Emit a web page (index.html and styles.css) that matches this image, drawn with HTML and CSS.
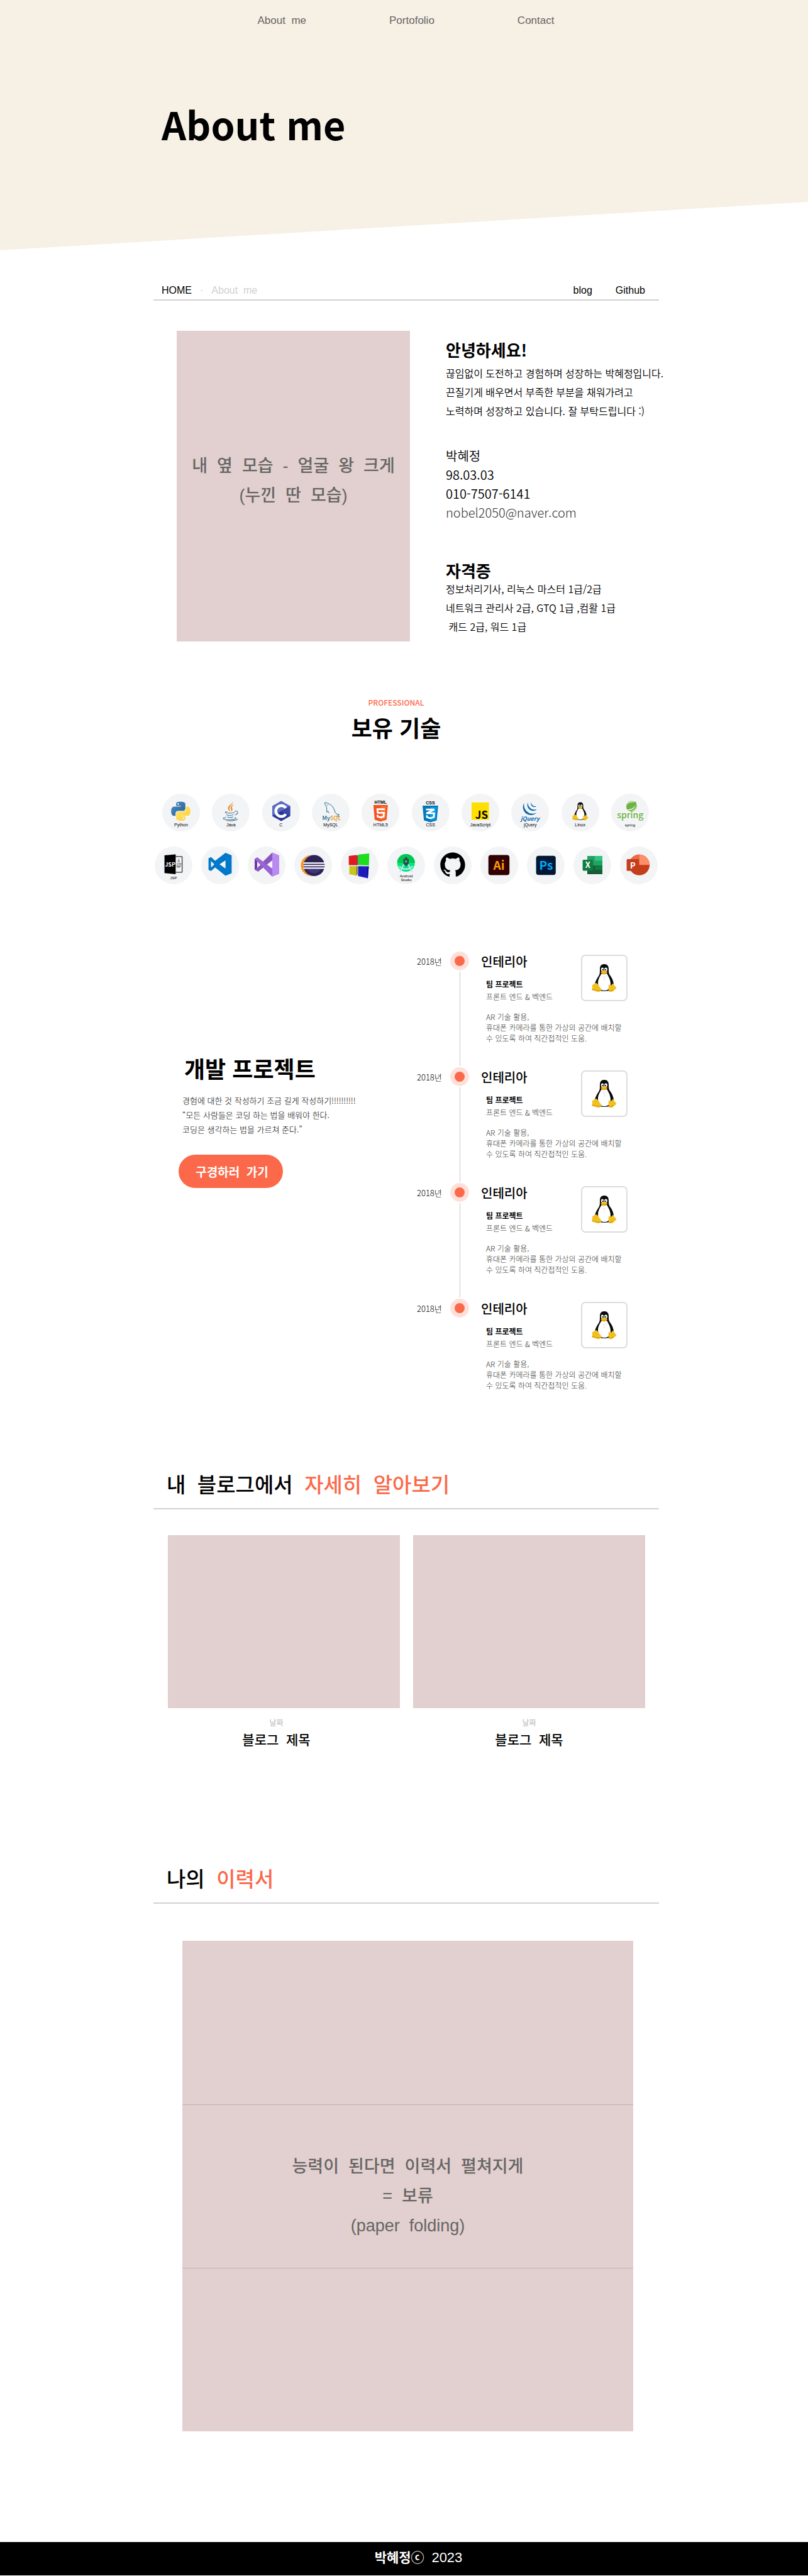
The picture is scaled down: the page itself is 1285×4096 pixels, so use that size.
FILE: index.html
```html
<!DOCTYPE html>
<html lang="ko">
<head>
<meta charset="utf-8">
<meta name="viewport" content="width=device-width, initial-scale=1">
<title>About me</title>
<link rel="stylesheet" href="styles.css">
</head>
<body>
<svg class="sprite" aria-hidden="true">
  <symbol id="tux" viewBox="0 0 40 46">
    <path d="M20 1c-5 0-7 3-7 8 0 6 0 8-2 11-3 5-6 9-6 15 0 6 6 9 15 9s15-3 15-9c0-6-2-11-5-15s-3-6-3-11c0-5-2-8-7-8z" fill="#0a0a0a"/>
    <path d="M15 17c-2 4-5 8-5 14 0 8 4 12 10 12 7 0 10-4 10-11 0-7-4-12-5-15-3-2-7-2-10 0z" fill="#fff"/>
    <ellipse cx="17" cy="9.500" rx="2.200" ry="3" fill="#fff"/>
    <ellipse cx="22.500" cy="9.500" rx="2.400" ry="3" fill="#fff"/>
    <circle cx="17.600" cy="10" r="1.100"/><circle cx="22" cy="10" r="1.100"/>
    <path d="M14.500 13.500c2-2 3.500-2.500 5.500-2.500s4 1.500 5 2.500c0 2-3.500 4-5.500 4s-5-2-5-4z" fill="#f4b921"/>
    <path d="M15 14.500c3 1.500 6 1.500 9.500-.5" fill="none" stroke="#a87708" stroke-width=".6"/>
    <path d="M1 34c2 0 4-3 6-3s5 6 8 9c1 3-1 5-4 5-4 0-6-2-9-2-3-1-1-3-1-5v-4z" fill="#f2c01e"/>
    <path d="M27 33c1 2 4 3 6-1 2 0 3 3 6 6 1 2-2 3-4 5-2 3-8 3-8 0-1-3 0-7 0-10z" fill="#f2c01e"/>
    <path d="M1 41c3 1 8 3 13 2M27 43c3 1 5 0 8-2" fill="none" stroke="#c9930f" stroke-width="1"/>
    <path d="M20 20v8M17 21l2 1M22 22l2-1" stroke="#d4d4d4" stroke-width=".7" fill="none"/>
  </symbol>
</svg>

<header class="hero">
  <nav class="nav">
    <a href="#about">About  me</a>
    <a href="#projects">Portofolio</a>
    <a href="#resume">Contact</a>
  </nav>
  <h1 class="hero-title">About me</h1>
</header>

<main class="content">
  <div class="crumbs">
    <div class="crumb-path"><a href="#">HOME</a><span class="crumb-dot">·</span><span class="crumb-here">About  me</span></div>
    <div class="crumb-links"><a href="#blog">blog</a><a href="#github">Github</a></div>
  </div>

  <section class="profile" id="about">
    <div class="photo placeholder">내  옆  모습  -  얼굴  왕  크게
(누낀  딴  모습)</div>
    <div class="bio">
      <h2 class="bio-title">안녕하세요!</h2>
      <p class="bio-text intro">끊임없이 도전하고 경험하며 성장하는 박혜정입니다.<br>끈질기게 배우면서 부족한 부분을 채워가려고<br>노력하며 성장하고 있습니다. 잘 부탁드립니다 :)</p>
      <ul class="facts">
        <li>박혜정</li>
        <li>98.03.03</li>
        <li>010-7507-6141</li>
        <li><a href="mailto:nobel2050@naver.com">nobel2050@naver.com</a></li>
      </ul>
      <h2 class="bio-title">자격증</h2>
      <p class="bio-text">정보처리기사, 리눅스 마스터 1급/2급<br>네트워크 관리사 2급, GTQ 1급 ,컴활 1급<br>&nbsp;캐드 2급, 워드 1급</p>
    </div>
  </section>

  <section class="skills">
    <p class="eyebrow">PROFESSIONAL</p>
    <h2 class="title">보유 기술</h2>
    <ul class="skill-row inset">
      <li class="skill"><svg viewBox="0 0 60 60"><defs><linearGradient id="pyb" x1="0" y1="0" x2="1" y2="1"><stop offset="0" stop-color="#4b8fc9"/><stop offset="1" stop-color="#2b5f8e"/></linearGradient><linearGradient id="pyy" x1="0" y1="0" x2="1" y2="1"><stop offset="0" stop-color="#ffe873"/><stop offset="1" stop-color="#ffcc2e"/></linearGradient></defs><g transform="translate(14.300 12.700) scale(1.260)"><path fill="url(#pyb)" d="M14.250.18l.9.2.73.26.59.3.45.32.34.34.25.34.16.33.1.3.04.26.02.2-.01.13V8.500l-.05.63-.13.55-.21.46-.26.38-.3.31-.33.25-.35.19-.35.14-.33.1-.3.07-.26.04-.21.02H8.770l-.69.05-.59.14-.5.22-.41.27-.33.32-.27.35-.2.36-.15.37-.1.35-.07.32-.04.27-.02.21v3.060H3.170l-.21-.03-.28-.07-.32-.12-.35-.18-.36-.26-.36-.36-.35-.46-.32-.59-.28-.73-.21-.88-.14-1.050-.05-1.230.06-1.220.16-1.040.24-.87.32-.71.36-.57.4-.44.42-.33.42-.24.4-.16.36-.1.32-.05.24-.01h.16l.06.01h8.160v-.83H6.180l-.01-2.750-.02-.37.05-.34.11-.31.17-.28.25-.26.31-.23.38-.2.44-.18.51-.15.58-.12.64-.1.71-.06.77-.04.84-.02 1.270.05zm-6.300 1.980l-.23.33-.08.41.08.41.23.34.33.22.41.09.41-.09.33-.22.23-.34.08-.41-.08-.41-.23-.33-.33-.22-.41-.09-.41.09z"/><path fill="url(#pyy)" d="M21.040 6.110l.28.06.32.12.35.18.36.27.36.35.35.47.32.59.28.73.21.88.14 1.040.05 1.230-.06 1.230-.16 1.040-.24.86-.32.71-.36.57-.4.45-.42.33-.42.24-.4.16-.36.09-.32.05-.24.02-.16-.01h-8.220v.82h5.840l.01 2.760.02.36-.05.34-.11.31-.17.29-.25.25-.31.24-.38.2-.44.17-.51.15-.58.13-.64.09-.71.07-.77.04-.84.01-1.270-.04-1.070-.14-.9-.2-.73-.25-.59-.3-.45-.33-.34-.34-.25-.34-.16-.33-.1-.3-.04-.25-.02-.2.01-.13v-5.340l.05-.64.13-.54.21-.46.26-.38.3-.32.33-.24.35-.2.35-.14.33-.1.3-.06.26-.04.21-.02.13-.01h5.840l.69-.05.59-.14.5-.21.41-.28.33-.32.27-.35.2-.36.15-.36.1-.35.07-.32.04-.28.02-.21V6.070h2.090zM14.570 20.360l-.23.33-.08.41.08.41.23.33.33.23.41.08.41-.08.33-.23.23-.33.08-.41-.08-.41-.23-.33-.33-.23-.41-.08-.41.08z"/></g></svg><span>Python</span></li>
      <li class="skill"><svg viewBox="0 0 60 60" fill="none" stroke-linecap="round"><path fill="#e58a1f" d="M33 10.500c2 5-7.500 8-7.500 12.500 0 2.500 2.500 4.500 4 6-1-3-2-4-1.500-6.500C28.500 19 35 16 33 10.500z"/><path fill="#e58a1f" d="M35.500 17c-4 1.500-6.500 4-5.500 7 .5 1.500 1.500 2.500.5 4.500 3-2 2.500-4 1.500-5.500-1-2 1-4 3.500-6z"/><g stroke="#4f7f9c" stroke-width="1.100"><path d="M24 28.500c-3 .5-4 1.500-1 2 4 .6 9 .3 13-.5M36.500 28c3-1 5 .5 4.500 2.500-.4 1.500-2 2.500-4 3"/><path d="M23.500 33c-.5 1.500 5 2 10.500.8M25 36.500c0 1.500 5 1.800 8.500.5"/><path d="M22 37.500c-6 1-5 3 1 3.500 6 .5 13 0 15-1.200 1-.8-.5-1.500-1.500-1.800M23 42.800c6 .6 16 .3 18-2.300"/></g></svg><span>Java</span></li>
      <li class="skill"><svg viewBox="0 0 60 60"><path fill="#5c6bc0" d="M30.200 11.600l14.300 8v16l-14.300 8-14.200-8v-16z"/><path fill="#3949ab" d="M44.500 19.600v16L30.200 27.600z"/><path fill="#283593" d="M16 35.600l14.200-8 14.300 8-14.300 8z"/><path fill="none" stroke="#fff" stroke-width="4.500" d="M37.500 22.700a8.700 8.700 0 1 0 0 9.800"/></svg><span>C</span></li>
      <li class="skill"><svg viewBox="0 0 60 60"><path fill="none" stroke="#14688f" stroke-width="1" stroke-linejoin="round" d="M27.500 31c-1-1-1.500-2-2-3.500-.5 1.500-1.500 2-1.500 2-1-3 0-5-.5-7-.5-3-3-5-3-7.500 0-1.500 3-1 5 .5 6 2 9.500 7 10.500 11.500 1 4 3.500 6 7.500 6.500l-2 .8c1 1 1.500 1.700 2.500 2.700-2 0-3.500-1-4.500-2"/><circle cx="25" cy="18" r=".7" fill="#14688f"/><text x="16.500" y="42" class="mark mysql"><tspan fill="#12608a">My</tspan><tspan fill="#e8941a">SQL</tspan></text></svg><span>MySQL</span></li>
      <li class="skill"><svg viewBox="0 0 60 60"><text x="30.200" y="16.300" class="mark heavy" text-anchor="middle">HTML</text><path fill="#f4511e" d="M18.800 18h23l-2.100 23.500-9.400 2.700-9.400-2.700z"/><path fill="#ff6d2e" d="M30.300 20v22l7.500-2.200L39.600 20z"/><path fill="none" stroke="#fff" stroke-width="2.800" d="M37 24.600H25.200l.5 5.800h10l-.6 6-4.800 1.500-4.700-1.500-.2-2.700"/></svg><span>HTML5</span></li>
      <li class="skill"><svg viewBox="0 0 60 60"><text x="29.500" y="16.700" class="mark heavy" text-anchor="middle">CSS</text><path fill="#0277bd" d="M17 19h24.800l-2.300 23.600-10.100 2.800-10.200-2.800z"/><path fill="#039be5" d="M29.400 21v22.300l8.200-2.300 2-20z"/><path fill="none" stroke="#fff" stroke-width="2.800" d="M22.500 25.200h13.200L23 31.200h12.400l-.5 6-5.500 1.900-5.400-1.900-.2-2.800"/></svg><span>CSS</span></li>
      <li class="skill"><svg viewBox="0 0 60 60"><path fill="#ffdf00" d="M16 14h27.500v27.500H16z"/><text x="42" y="39.500" text-anchor="end" class="mark js">JS</text></svg><span>JavaScript</span></li>
      <li class="skill"><svg viewBox="0 0 60 60"><g fill="#0868ac"><path d="M20.500 15c-4 6-1 14.500 5 17.500 5 2.500 11 1.800 14.500-2-5 2.200-10 1.500-13.500-1-5-3.500-7-9-6-14.500z"/><path d="M26.500 14c-2 4.500-.5 9.500 4 12 3.500 2 7.500 1.500 10-1-4 1-7 .5-9.500-1.500-3-2.500-4.700-5.500-4.500-9.500z"/><path d="M31.500 13.500c-1 3 0 5.500 2.500 7 2 1.200 4.500 1 6-.5-2.500.3-4.500-.3-6-1.500-1.500-1.400-2.500-3-2.500-5z"/></g><text x="30" y="42.500" text-anchor="middle" class="mark jquery">jQuery</text></svg><span>jQuery</span></li>
      <li class="skill"><svg viewBox="0 0 60 60"><use href="#tux" x="17" y="13" width="26" height="30"/></svg><span>Linux</span></li>
      <li class="skill"><svg viewBox="0 0 60 60"><circle cx="32.500" cy="20" r="8" fill="none" stroke="#6db33f" stroke-width=".8"/><path fill="#6db33f" d="M39 12.500c2 5 1 11-3.500 13.500-3 1.700-6 1.200-8.500.5 6-.5 10-2.500 11.500-8-3 4.500-7 6.500-13.500 6.500-2-5 .5-9 4-10.500 4-1.500 7 0 10-2z"/><text x="30.300" y="38.500" text-anchor="middle" class="mark spring">spring</text></svg><span class="small">spring</span></li>
    </ul>
    <ul class="skill-row">
      <li class="skill"><svg viewBox="0 0 60 60"><path d="M15.600 14l17.800-1.500V44l-17.800-1.800z"/><path d="M33.400 16h10.300v25H33.400" fill="none" stroke="#000" stroke-width="1"/><text x="24.600" y="31.500" text-anchor="middle" class="mark jsp">JSP</text><path fill="none" stroke="#222" stroke-width=".7" d="M38.500 19.500c1 2-2 3-1.500 5M39.500 22c-1 1-1 2 0 3M35.500 27h5.500M35 29c2 .8 4 .8 6 0M41 27c1.500-.3 1.500 1.500 0 1.800M34.500 31.200c2 .8 5 .8 7.500-.3M35.500 33h5"/></svg><span class="small">JSP</span></li>
      <li class="skill"><svg viewBox="0 0 60 60"><path fill="#0179cb" fill-rule="evenodd" d="M38.600 10l9.800 4v28.500l-9.800 4.100-16.500-13.300-6.500 5.700-4-2.100V18.700l4-1.900 6.500 5.900zM15.600 23.300v10.200l5.300-5.200zM38.600 22l-9.400 6.300 9.400 6.600z"/></svg></li>
      <li class="skill"><svg viewBox="0 0 60 60"><path fill="#6a3a9e" d="M11 20l5-2.500v21L11 36.500z"/><path fill="#f3f4f6" d="M15 23.300v11.200l5.500-5.500z"/><path fill="#8a57c0" d="M39 9.400V22L16.500 40l-5.500-3z"/><path fill="#f3f4f6" d="M15 23.300v10.700l5.300-5z"/><path fill="#9a63d6" d="M15 17l24 18v13L11 20z"/><path fill="#b98bf1" d="M39 9.400l11 4.600v29.500L39 48z"/></svg></li>
      <li class="skill"><svg viewBox="0 0 60 60"><path fill="#f7941e" d="M28 13c-10 1-17.500 8-17.500 17.300S18 46.500 28 47.500c-8-2.500-13-9-13-17.200S20 15.500 28 13z"/><circle cx="31.500" cy="30.300" r="16.800" fill="#2c2255"/><path fill="#41347f" d="M21 36h21c-2 4.500-6 6.500-10.500 6.500S23 40.500 21 36z"/><path fill="#fff" d="M14.500 25.300h34v2.200h-34zM14.500 29.300h34v2.200h-34zM14.500 33.300h34v2.200h-34z"/></svg></li>
      <li class="skill"><svg viewBox="0 0 60 60"><path fill="#e01b1f" d="M12.700 15l12-1.500v16.300l-12-.3z"/><path fill="#8c1013" d="M24.700 13.500l2 1v15l-2 .3z"/><path fill="#1ddd1c" d="M28.500 12.700L45.200 11l-.5 19-16.200-.5z"/><path fill="#0a8a0c" d="M27.300 13.500l1.200-.8v16.800h-1.200z"/><path fill="#c9c51f" d="M13.500 31l11 .2v15.200l-11-2.400z"/><path fill="#7d7a12" d="M24.500 31.200l2.200.3V44l-2.200 2.400z"/><path fill="#1b1bc0" d="M27.500 31.300l17 .3-1.500 19L27.500 47z"/><path fill="#0e0e78" d="M42.500 32l2-.4-1.500 19-1-.3z"/></svg></li>
      <li class="skill"><svg viewBox="0 0 60 60"><circle cx="29.700" cy="26" r="14" fill="#00e676"/><path fill="#00c853" d="M15.700 26a14 14 0 0 1 28 0z"/><g fill="none" stroke="#b8e8fb" stroke-width="2"><path d="M27.500 26L20 41M32 26l7.500 15"/><path d="M19 31.500c5 6 16 6 21.500-.5"/></g><path fill="#37474f" d="M28 17h3.500v2.500H34v8l-4.200 4-4.300-4v-8H28z"/><circle cx="29.700" cy="23.700" r="1.800" fill="#00e676"/></svg><span class="small double">Android<br>Studio</span></li>
      <li class="skill"><svg viewBox="0 0 60 60"><path transform="translate(10.300 9) scale(1.640)" d="M12 .297c-6.630 0-12 5.373-12 12 0 5.303 3.438 9.800 8.205 11.385.6.113.82-.258.82-.577 0-.285-.01-1.040-.015-2.040-3.338.724-4.042-1.610-4.042-1.610C4.422 18.070 3.633 17.700 3.633 17.700c-1.087-.744.084-.729.084-.729 1.205.084 1.838 1.236 1.838 1.236 1.070 1.835 2.809 1.305 3.495.998.108-.776.417-1.305.76-1.605-2.665-.3-5.466-1.332-5.466-5.930 0-1.310.465-2.380 1.235-3.220-.135-.303-.54-1.523.105-3.176 0 0 1.005-.322 3.300 1.230.96-.267 1.980-.399 3-.405 1.020.006 2.040.138 3 .405 2.280-1.552 3.285-1.230 3.285-1.230.645 1.653.24 2.873.12 3.176.765.84 1.230 1.910 1.230 3.220 0 4.610-2.805 5.625-5.475 5.920.42.36.81 1.096.81 2.220 0 1.606-.015 2.896-.015 3.286 0 .315.21.69.825.57C20.565 22.092 24 17.592 24 12.297c0-6.627-5.373-12-12-12"/></svg></li>
      <li class="skill"><svg viewBox="0 0 60 60"><rect x="12.700" y="13.400" width="33.500" height="32" rx="4" fill="#310000"/><text x="29.500" y="37" text-anchor="middle" class="mark adobe" fill="#ff9a00">Ai</text></svg></li>
      <li class="skill"><svg viewBox="0 0 60 60"><rect x="14.600" y="14.700" width="31.200" height="30.600" rx="4" fill="#001833"/><text x="30.500" y="36.500" text-anchor="middle" class="mark adobe" fill="#00a8ff">Ps</text></svg></li>
      <li class="skill"><svg viewBox="0 0 60 60"><path fill="#21a366" d="M22 15h24v29H22z"/><path fill="#33c481" d="M34 15h12v7.500H34z"/><path fill="#107c41" d="M22 30h24v7H22z"/><path fill="#185c37" d="M22 30h12v7h12v7H22z"/><rect x="14.600" y="21" width="16.600" height="17.400" rx="1.500" fill="#107c41"/><text x="22.800" y="34.200" text-anchor="middle" class="mark office">X</text></svg></li>
      <li class="skill"><svg viewBox="0 0 60 60"><circle cx="30.700" cy="29.300" r="16.500" fill="#c43e1c"/><path fill="#ed6c47" d="M14.200 29.300a16.500 16.500 0 0 1 16.500-16.500v16.500z"/><path fill="#ff8f6b" d="M30.700 12.800a16.500 16.500 0 0 1 16.500 16.500H30.700z"/><rect x="10.600" y="20" width="19.600" height="18.800" rx="1.500" fill="#c43e1c"/><text x="20.400" y="34.500" text-anchor="middle" class="mark office">P</text></svg></li>
    </ul>
  </section>

  <section class="projects" id="projects">
    <div class="pitch">
      <h2 class="title">개발 프로젝트</h2>
      <p class="pitch-text">경험에 대한 것 작성하기 조금 길게 작성하기!!!!!!!!!!<br>“모든 사람들은 코딩 하는 법을 배워야 한다.<br>코딩은 생각하는 법을 가르쳐 준다.”</p>
      <button type="button" class="cta">구경하러  가기</button>
    </div>
    <ol class="timeline">
      <li class="event">
        <time class="year" datetime="2018">2018년</time>
        <div class="track"><span class="dot"></span></div>
        <div class="event-body">
          <div><h3>인테리아</h3><p class="team">팀 프로젝트</p><p class="role">프론트 엔드 &amp; 벡엔드</p></div>
          <div class="thumb"><svg viewBox="0 0 40 46"><use href="#tux"/></svg></div>
          <p class="desc">AR 기술 활용,<br>휴대폰 카메라를 통한 가상의 공간에 배치할<br>수 있도록 하여 직간접적인 도움.</p>
        </div>
      </li>
      <li class="event">
        <time class="year" datetime="2018">2018년</time>
        <div class="track"><span class="dot"></span></div>
        <div class="event-body">
          <div><h3>인테리아</h3><p class="team">팀 프로젝트</p><p class="role">프론트 엔드 &amp; 벡엔드</p></div>
          <div class="thumb"><svg viewBox="0 0 40 46"><use href="#tux"/></svg></div>
          <p class="desc">AR 기술 활용,<br>휴대폰 카메라를 통한 가상의 공간에 배치할<br>수 있도록 하여 직간접적인 도움.</p>
        </div>
      </li>
      <li class="event">
        <time class="year" datetime="2018">2018년</time>
        <div class="track"><span class="dot"></span></div>
        <div class="event-body">
          <div><h3>인테리아</h3><p class="team">팀 프로젝트</p><p class="role">프론트 엔드 &amp; 벡엔드</p></div>
          <div class="thumb"><svg viewBox="0 0 40 46"><use href="#tux"/></svg></div>
          <p class="desc">AR 기술 활용,<br>휴대폰 카메라를 통한 가상의 공간에 배치할<br>수 있도록 하여 직간접적인 도움.</p>
        </div>
      </li>
      <li class="event">
        <time class="year" datetime="2018">2018년</time>
        <div class="track"><span class="dot"></span></div>
        <div class="event-body">
          <div><h3>인테리아</h3><p class="team">팀 프로젝트</p><p class="role">프론트 엔드 &amp; 벡엔드</p></div>
          <div class="thumb"><svg viewBox="0 0 40 46"><use href="#tux"/></svg></div>
          <p class="desc">AR 기술 활용,<br>휴대폰 카메라를 통한 가상의 공간에 배치할<br>수 있도록 하여 직간접적인 도움.</p>
        </div>
      </li>
    </ol>
  </section>

  <section class="blog" id="blog">
    <h2 class="section-title">내  블로그에서  <em>자세히  알아보기</em></h2>
    <div class="posts">
      <article class="post"><div class="cover"></div><div class="caption"><p class="date">날짜</p><h3>블로그  제목</h3></div></article>
      <article class="post"><div class="cover"></div><div class="caption"><p class="date">날짜</p><h3>블로그  제목</h3></div></article>
    </div>
  </section>

  <section class="resume" id="resume">
    <h2 class="section-title">나의  <em>이력서</em></h2>
    <div class="paper">
      <div class="fold"></div>
      <div class="fold placeholder">능력이  된다면  이력서  펼쳐지게
=  보류
(paper  folding)</div>
      <div class="fold"></div>
    </div>
  </section>
</main>

<footer class="footer">박혜정ⓒ  <span>2023</span></footer>
</body>
</html>
```
FILE: styles.css
```css
:root {
  --accent: #fb694a;
  --blush: #e2cfcf;
  --rule: #d2d2d2;
  --kr: "Noto Sans CJK KR", "Noto Sans", sans-serif;
  --latin: "Liberation Sans", "Noto Sans CJK KR", sans-serif;
}

* { box-sizing: border-box; margin: 0; padding: 0; }
body { font-family: var(--kr); color: #000; background: #fff; }
a { color: inherit; text-decoration: none; }
ul, ol { list-style: none; }
.sprite { display: block; width: 0; height: 0; }

/* Header */
.hero {
  height: 398px;
  padding-top: 22px;
  background: #f7f0e4;
  clip-path: polygon(0 0, 100% 0, 100% 321px, 0 398px);
}
.nav {
  display: flex;
  justify-content: center;
  gap: 132px;
  padding-left: 6px;
  font: 17px/22px var(--latin);
  color: #646464;
  white-space: pre;
}
.hero-title {
  margin: 109px 237px 0 257px;
  font-size: 61px;
  line-height: 88px;
  font-weight: 700;
}

.content { margin: 0 237px 0 244px; }

/* Breadcrumbs */
.crumbs {
  display: flex;
  justify-content: space-between;
  margin-top: 50px;
  padding: 0 22px 0 13px;
  border-bottom: 2px solid var(--rule);
  font: 16px/28px var(--latin);
  white-space: pre;
}
.crumb-path { display: flex; gap: 13px; }
.crumb-dot, .crumb-here { color: #d0d0d0; }
.crumb-links { display: flex; gap: 37px; }

/* Profile */
.placeholder {
  display: flex;
  align-items: center;
  justify-content: center;
  font: 500 27px/47px var(--latin);
  color: #666664;
  text-align: center;
  white-space: pre;
  background: var(--blush);
}
.profile {
  display: flex;
  gap: 57px;
  margin-top: 48px;
  padding-left: 37px;
}
.photo {
  flex: none;
  width: 371px;
  height: 494px;
  padding-bottom: 16px;
}
.bio { padding-top: 16px; white-space: nowrap; }
.bio-title { font-size: 26px; line-height: 28px; font-weight: 700; }
.bio-text { font-size: 16px; line-height: 30px; font-weight: 350; }
.intro { margin-top: 8px; }
.facts { margin: 42px 0 63px; font-size: 20px; line-height: 30px; font-weight: 350; }
.facts a { color: #333; font-weight: 300; }

/* Skills */
.title { font-size: 36px; line-height: 44px; font-weight: 700; }
.skills { margin-top: 88px; }
.eyebrow, .skills .title { padding-right: 32px; text-align: center; }
.eyebrow { color: var(--accent); font-size: 12px; line-height: 18px; font-weight: 500; }
.skills .title { margin: 8px 0 84px; }
.skill-row {
  display: flex;
  justify-content: space-between;
  padding: 0 2px;
}
.skill-row.inset { padding: 0 16px 0 14px; margin-bottom: 24px; }
.skill {
  display: grid;
  width: 60px;
  height: 60px;
  border-radius: 50%;
  background: #f3f4f6;
}
.skill > * { grid-area: 1 / 1; }
.skill svg { width: 60px; height: 60px; }
.skill span {
  align-self: end;
  margin: 0 -8px;
  padding-bottom: 5px;
  font: 7px/10px var(--latin);
  text-align: center;
}
.skill .small { font-size: 6px; line-height: 6px; padding-bottom: 7px; }
.skill .double { padding-bottom: 4px; }
.mark { font-family: var(--kr); font-weight: 700; }
.mysql { font-size: 9px; font-weight: 500; }
.heavy { font-family: "Liberation Sans", sans-serif; font-size: 7px; }
.js { font-size: 17px; }
.jquery { font-size: 9px; font-style: italic; fill: #0868ac; }
.spring { font-size: 14px; font-weight: 500; fill: #6db33f; }
.jsp { font-size: 9px; fill: #fff; }
.adobe { font-size: 19px; }
.office { font-size: 13px; fill: #fff; }

/* Projects */
.projects {
  display: flex;
  justify-content: space-between;
  margin-top: 107px;
  padding: 0 50px 0 40px;
}
.pitch { padding-top: 163px; }
.pitch .title { padding-left: 9px; }
.pitch-text { margin: 18px 0 29px; padding-left: 6px; font-size: 13px; line-height: 23px; font-weight: 300; }
.cta {
  width: 166px;
  height: 53px;
  padding-left: 4px;
  border: 0;
  border-radius: 27px;
  background: var(--accent);
  color: #fff;
  font: 700 19px/30px var(--kr);
  white-space: pre;
  cursor: pointer;
}
.event { display: flex; min-height: 184px; }
.event:last-child { min-height: 0; }
.year { width: 53px; font-size: 13px; line-height: 32px; font-weight: 300; }
.track {
  display: flex;
  flex-direction: column;
  align-items: center;
  gap: 2px;
  width: 30px;
  margin: 0 19px 2px 0;
}
.dot {
  width: 30px;
  height: 30px;
  border: 7px solid #fee0da;
  border-radius: 50%;
  background: var(--accent);
}
.event:not(:last-child) .track::after {
  content: "";
  flex: 1;
  width: 1px;
  background: #c8c8c8;
}
.event-body {
  display: grid;
  grid-template-columns: 159px 74px;
  align-items: start;
  align-content: start;
}
.event-body h3 { font-size: 20px; line-height: 32px; font-weight: 500; }
.team, .role, .desc { padding-left: 8px; font-size: 12px; line-height: 20px; }
.team { margin-top: 10px; font-weight: 700; }
.role, .desc { color: #333; font-weight: 300; }
.desc { grid-column: 1 / -1; margin-top: 13px; line-height: 17px; white-space: nowrap; }
.thumb {
  display: grid;
  place-items: center;
  height: 74px;
  margin-top: 5px;
  border: 2px solid #dcdcda;
  border-radius: 7px;
}
.thumb svg { width: 40px; height: 46px; }

/* Blog and resume */
.section-title {
  padding: 0 0 16px 21px;
  border-bottom: 2px solid var(--rule);
  font-size: 33px;
  line-height: 46px;
  font-weight: 500;
  white-space: pre;
}
.section-title em { font-style: normal; color: var(--accent); }
.blog { margin-top: 125px; }
.posts { display: flex; gap: 21px; margin-top: 41px; padding: 0 22px 0 23px; }
.post { flex: 1; }
.cover { height: 275px; background: var(--blush); }
.caption { padding-top: 15px; text-align: center; white-space: pre; }
.post:first-child .caption { padding-right: 24px; }
.date { font-size: 12px; line-height: 16px; color: #b5b5b5; }
.caption h3 { margin-top: 4px; font-size: 21px; line-height: 28px; font-weight: 500; }

.resume { margin-top: 184px; }
.paper { margin: 59px 41px 0 46px; background: var(--blush); }
.fold { height: 260px; }
.fold + .fold { border-top: 1px solid #c7b0b1; }
.fold.placeholder { padding-top: 32px; }

.footer {
  height: 53px;
  margin-top: 176px;
  padding-left: 46px;
  background: #000;
  color: #fff;
  font: 700 21px/46px var(--kr);
  text-align: center;
  white-space: pre;
}
.footer span { font: 22px/46px var(--latin); }
```
